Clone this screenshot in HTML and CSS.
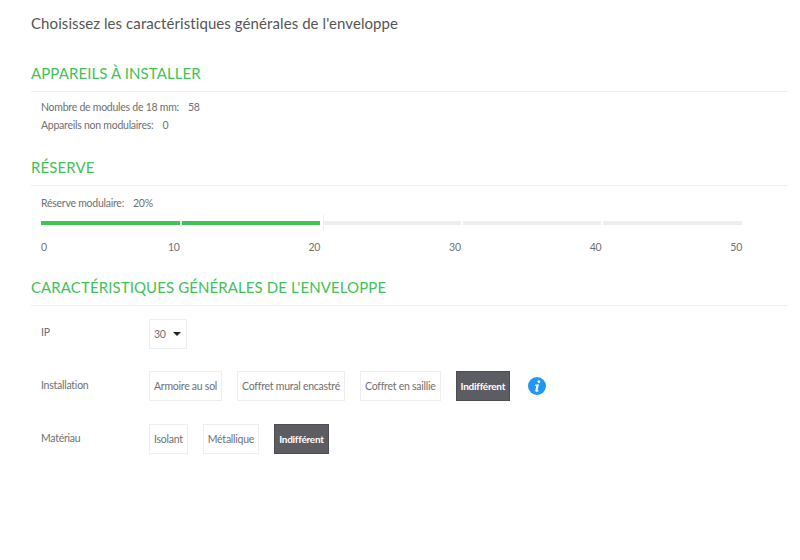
FILE: index.html
```html
<!doctype html>
<html>
  <head>
    <title>Enveloppe</title>
    <meta charset='utf-8'>
    <link rel="stylesheet" href="styles.css">
  </head>
  <body>
    <h1 class='vw-title'>Choisissez les caractéristiques générales de l'enveloppe</h1>

    <h2 class='sc-title sc-first'>APPAREILS À INSTALLER</h2>
    <div class='sc-body'>
      <p class='sc-line'><span>Nombre de modules de 18 mm:</span><span>58</span></p>
      <p class='sc-line sc-line-next'><span>Appareils non modulaires:</span><span>0</span></p>
    </div>

    <h2 class='sc-title sc-reserve'>RÉSERVE</h2>
    <div class='sc-body sc-body-slider'>
      <p class='sc-line'><span>Réserve modulaire:</span><span>20%</span></p>
      <div class='sl-slider'>
        <div class='sl-track'>
          <div class='sl-seg sl-on'></div>
          <div class='sl-seg sl-on'></div>
          <div class='sl-seg sl-after'></div>
          <div class='sl-seg'></div>
          <div class='sl-seg'></div>
          <div class='sl-thumb'></div>
        </div>
        <div class='sl-ticks'>
          <div class='sl-tick sl-tick-first'><span>0</span><span>10</span></div>
          <div class='sl-tick'>20</div>
          <div class='sl-tick'>30</div>
          <div class='sl-tick'>40</div>
          <div class='sl-tick'>50</div>
        </div>
      </div>
    </div>

    <h2 class='sc-title sc-general'>CARACTÉRISTIQUES GÉNÉRALES DE L'ENVELOPPE</h2>
    <div class='fm-rows'>
      <div class='fm-row fm-row-ip'>
        <div class='fm-label'>IP</div>
        <div class='fm-select'>30<span class='fm-caret'></span></div>
      </div>
      <div class='fm-row'>
        <div class='fm-label'>Installation</div>
        <div class='fm-options'>
          <div class='fm-option'>Armoire au sol</div>
          <div class='fm-option'>Coffret mural encastré</div>
          <div class='fm-option'>Coffret en saillie</div>
          <div class='fm-option fm-active'>Indifférent</div>
          <svg class='fm-info' width='18' height='18' viewBox='0 0 18 18'>
            <circle cx='9' cy='9' r='9' fill='#2196f3'/>
            <path d='M10.9 3.2a1.4 1.4 0 1 1-.1 2.8 1.4 1.4 0 0 1 .1-2.8zM6.9 7.7l4-.5-1.4 6c-.1.4.3.5 1 .1l.2.6c-1.5 1-3.6 1.6-3.3-.3l.9-4.8-1.4-.1z' fill='#fff'/>
          </svg>
        </div>
      </div>
      <div class='fm-row'>
        <div class='fm-label'>Matériau</div>
        <div class='fm-options'>
          <div class='fm-option'>Isolant</div>
          <div class='fm-option'>Métallique</div>
          <div class='fm-option fm-active'>Indifférent</div>
        </div>
      </div>
    </div>
  </body>
</html>
```

FILE: styles.css
```css
body {
  background-color: #fff;
  color: #707070;
  font-family: Lato, sans-serif;
  font-size: 10.5px;
  letter-spacing: -0.25px;
  margin: 0;
  padding: 14px 12px 0 31px;
}
.vw-title {
  color: #555;
  font-size: 15px;
  font-weight: 400;
  letter-spacing: 0.08px;
  line-height: 18px;
  margin: 0;
}
.sc-title {
  border-bottom: 1px solid #eee;
  color: #3fc256;
  font-size: 15px;
  font-weight: 400;
  letter-spacing: 0.1px;
  line-height: 18px;
  margin: 0;
  padding-bottom: 9px;
}
.sc-first {
  margin-top: 32px;
}
.sc-reserve {
  margin-top: 26px;
}
.sc-general {
  margin-top: 24px;
}
.sc-body {
  padding: 8px 46px 0 10px;
}
.sc-body-slider {
  padding-top: 10px;
}
.sc-line {
  display: flex;
  gap: 9px;
  line-height: 14px;
  margin: 0;
}
.sc-line-next {
  margin-top: 4px;
}
.sl-slider {
  margin-top: 11px;
}
.sl-track {
  display: grid;
  gap: 2px;
  grid-template-columns: repeat(5, 1fr);
  position: relative;
}
.sl-seg {
  background-color: #eee;
  height: 4px;
}
.sl-on {
  background-color: #3fc256;
}
.sl-after {
  margin-left: 2px;
}
.sl-thumb {
  background-color: #fff;
  border-right: 1px solid #eee;
  height: 16px;
  left: 40%;
  margin-left: -1px;
  position: absolute;
  top: -6px;
  width: 3px;
}
.sl-ticks {
  display: grid;
  gap: 2px;
  grid-template-columns: repeat(5, 1fr);
  line-height: 14px;
  margin-top: 15px;
  text-align: right;
}
.sl-tick-first {
  display: flex;
  justify-content: space-between;
}
.fm-rows {
  padding: 13px 0 0 10px;
}
.fm-row {
  display: flex;
  height: 30px;
  margin-bottom: 23px;
}
.fm-row-ip {
  margin-bottom: 22px;
}
.fm-label {
  flex: 0 0 108px;
  line-height: 14px;
  padding-top: 7px;
}
.fm-row-ip .fm-label {
  padding-top: 6px;
}
.fm-options {
  align-items: center;
  display: flex;
  gap: 15px;
}
.fm-option,
.fm-select {
  align-items: center;
  border: 1px solid #eee;
  box-sizing: border-box;
  display: flex;
  height: 30px;
  padding: 0 4px;
  white-space: nowrap;
}
.fm-select {
  gap: 7px;
  width: 38px;
}
.fm-caret {
  border-left: 4.5px solid transparent;
  border-right: 4.5px solid transparent;
  border-top: 4.5px solid #222;
  height: 0;
  width: 0;
}
.fm-active {
  background-color: #5c5c63;
  border-color: #4d4d52;
  color: #fff;
  font-size: 10px;
  font-weight: 700;
  letter-spacing: -0.25px;
}
.fm-info {
  margin-left: 3px;
}
```
